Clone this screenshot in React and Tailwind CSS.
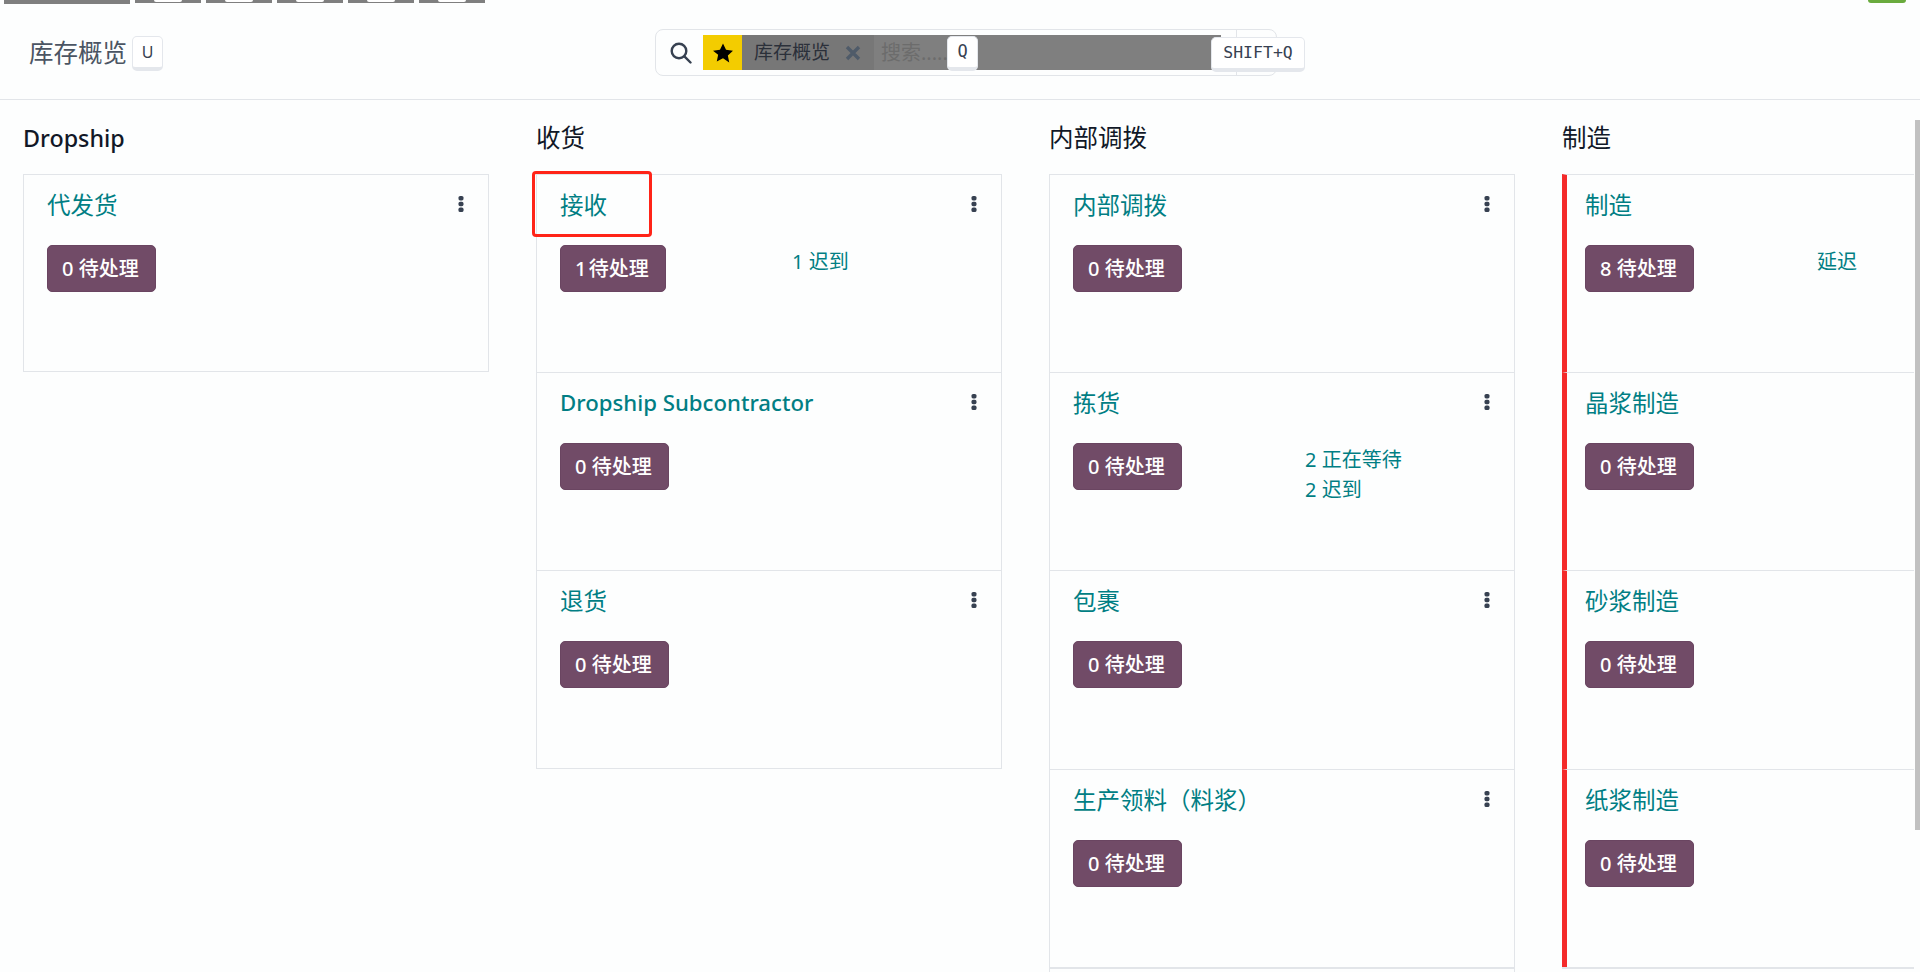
const font = "font-['Noto_Sans','Noto_Sans_CJK_SC',sans-serif]";

const columns = [
    {
        title: 'Dropship',
        titleClass: 'text-[23.3px] font-medium',
        cards: [{ name: '代发货', count: 0 }],
    },
    {
        title: '收货',
        cards: [
            { name: '接收', count: 1, stats: ['1 迟到'] },
            { name: 'Dropship Subcontractor', latin: true, count: 0 },
            { name: '退货', count: 0 },
        ],
    },
    {
        title: '内部调拨',
        cards: [
            { name: '内部调拨', count: 0 },
            { name: '拣货', count: 0, stats: ['2 正在等待', '2 迟到'] },
            { name: '包裹', count: 0 },
            { name: '生产领料（料浆）', count: 0 },
            { name: '', count: null },
        ],
    },
    {
        title: '制造',
        late: true,
        cards: [
            { name: '制造', count: 8, stats: ['延迟'] },
            { name: '晶浆制造', count: 0 },
            { name: '砂浆制造', count: 0 },
            { name: '纸浆制造', count: 0 },
            { name: '', count: null },
        ],
    },
];

function Key({ children, className = '' }) {
    return (
        <span className={`flex h-[35px] items-center justify-center rounded-[5px] border border-b-[4px] border-[#e4e7ec] bg-white text-[#374151] ${className}`}>
            {children}
        </span>
    );
}

function Kebab() {
    return (
        <svg width="6" height="16" viewBox="0 0 6 16" className="mt-[8px] shrink-0 fill-[#374151]">
            <rect x="0.5" y="0" width="5" height="4.4" rx="1.6" />
            <rect x="0.5" y="5.8" width="5" height="4.4" rx="1.6" />
            <rect x="0.5" y="11.6" width="5" height="4.4" rx="1.6" />
        </svg>
    );
}

function Card({ card, late, last }) {
    if (card.count === null) {
        return <div className="h-[198.4px] border-t-[2px] border-[#e2e5e9]" />;
    }
    return (
        <div className={`h-[198.4px] border-t border-[#e2e5e9] pt-[13px] pr-[24px] ${late ? 'border-l-[5px] border-l-[#f42a2a] pl-[18px]' : 'pl-[23px]'} ${last ? 'border-b' : ''}`}>
            <div className="flex h-[38px] items-start justify-between">
                <span className={`leading-[34px] text-[#017e84] ${card.latin ? 'text-[22.2px] font-medium' : 'text-[23.5px]'}`}>{card.name}</span>
                {!late && <Kebab />}
            </div>
            <div className="mt-[19px] flex items-start">
                <div className="w-[232px] shrink-0">
                    <span className="inline-flex h-[47px] items-center rounded-[5px] border border-[#6a4561] bg-[#714b67] pl-[14px] pr-[16px] pt-[1px] text-[20px] font-medium text-white">
                        {/* the 1 sits narrower than the other digits in the original */}
                        <span className={card.count === 1 ? 'mr-[-3px]' : ''}>{card.count}</span>&nbsp;待处理
                    </span>
                </div>
                <div className="mt-[2px] flex flex-col text-[20px] leading-[30px] text-[#017e84]">
                    {card.stats?.map((s) => (
                        <span key={s}>{s}</span>
                    ))}
                </div>
            </div>
        </div>
    );
}

function Header() {
    return (
        <div className="relative h-[100px] shrink-0 border-b border-[#e2e5e9]">
            {/* strip of the nav bar cut off at the top */}
            <div className="flex items-start gap-[5px] pl-[4px]">
                <div className="h-[4px] w-[126px] bg-[#7f7f7f]" />
                {[0, 1, 2, 3, 4].map((i) => (
                    <div key={i} className="flex h-[3px] w-[66px] justify-center bg-[#7f7f7f]">
                        <div className="h-[2px] w-[28px] rounded-b-[3px] bg-white" />
                    </div>
                ))}
                <div className="ml-auto mr-[14px] h-[3px] w-[38px] rounded-b-[4px] bg-[#6aab3e]" />
            </div>
            <div className="flex h-[96px] items-center pl-[29px] pt-[3px]">
                <span className="text-[24.5px] text-[#4b5563]">库存概览</span>
                <Key className="ml-[5px] w-[31px] text-[16px]">U</Key>
                <div className="relative -mt-[2px] ml-[492px] flex h-[47px] w-[622px] items-center rounded-[8px] border border-[#e2e5e9] pl-[47px]">
                    <svg width="22" height="22" viewBox="0 0 22 22" fill="none" stroke="#374151" strokeWidth="2.4" className="absolute left-[14px]">
                        <circle cx="9" cy="9" r="7.3" />
                        <path d="M14.4 14.4 L20.5 20.5" strokeLinecap="round" />
                    </svg>
                    <div className="flex h-[35px] w-[518px] items-stretch bg-[#7f7f7f]">
                        <div className="flex w-[39px] items-center justify-center bg-[#f3cc00]">
                            <svg width="22" height="22" viewBox="0 0 24 24" className="fill-black">
                                <path d="M12 1.5l3.3 7 7.6 1-5.6 5.3 1.5 7.6L12 17.7l-6.8 3.7 1.5-7.6L1.1 9.5l7.6-1z" />
                            </svg>
                        </div>
                        <div className="flex w-[132px] items-center bg-[#777777] pl-[12px] text-[19px] text-[#2b303a]">
                            库存概览
                            <svg width="16" height="16" viewBox="0 0 16 16" stroke="#4f5b69" strokeWidth="3.4" className="ml-[15px]">
                                <path d="M2 2 L14 14 M14 2 L2 14" />
                            </svg>
                        </div>
                        <span className="flex items-center pl-[7px] text-[20px] text-[#6c6c6c]">搜索.....</span>
                    </div>
                    <div className="absolute bottom-0 left-[580px] top-0 w-px bg-[#e2e5e9]" />
                    <Key className="absolute left-[291px] top-[6px] w-[31px] font-['DejaVu_Sans_Mono',monospace] text-[17px]">Q</Key>
                    <Key className="absolute left-[555px] top-[7px] w-[94px] font-['DejaVu_Sans_Mono',monospace] text-[16.5px]">SHIFT+Q</Key>
                </div>
            </div>
        </div>
    );
}

export default function App() {
    return (
        <div className={`relative flex h-[972px] w-[1920px] flex-col overflow-hidden bg-[#fdfefe] ${font}`}>
            <Header />
            <div className="grid w-[1914px] flex-1 grid-cols-[466px_466px_466px_352px] gap-x-[47px] overflow-hidden pl-[23px]">
                {columns.map((col) => (
                    <div key={col.title}>
                        <div className={`flex h-[73.5px] items-center pt-[3px] text-[#111827] ${col.titleClass ?? 'text-[24.5px]'}`}>{col.title}</div>
                        <div className={`border-[#e2e5e9] ${col.late ? '' : 'border-x'}`}>
                            {col.cards.map((card, i) => (
                                <Card key={i} card={card} late={col.late} last={i === col.cards.length - 1} />
                            ))}
                        </div>
                    </div>
                ))}
            </div>

            {/* page scrollbar */}
            <div className="absolute right-0 top-[120px] h-[710px] w-[5px] bg-[#c1c1c1]" />
            {/* red annotation box from the screenshot */}
            <div className="absolute left-[532px] top-[171px] h-[66px] w-[120px] rounded-[4px] border-[3px] border-[#ff2418]" />
        </div>
    );
}
